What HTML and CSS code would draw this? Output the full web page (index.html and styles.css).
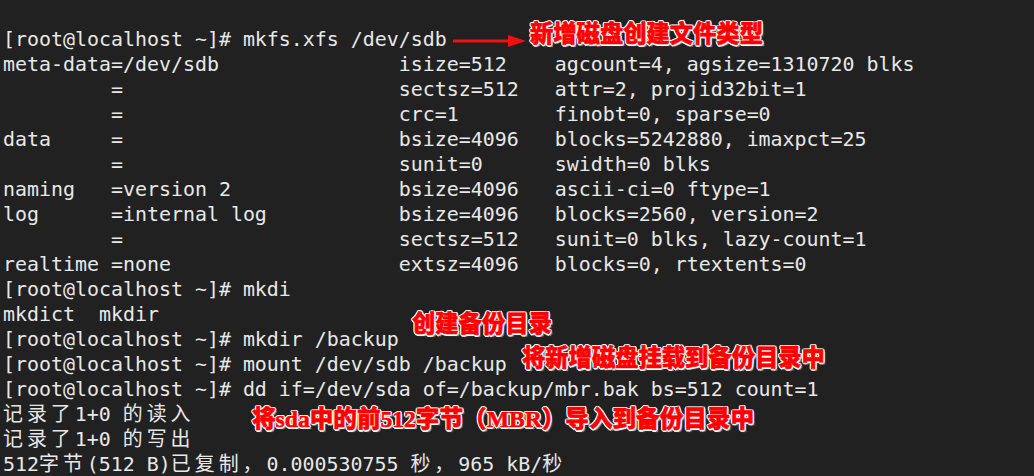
FILE: index.html
```html
<!DOCTYPE html>
<html lang="zh-CN">
<head>
<meta charset="utf-8">
<title>terminal</title>
<link rel="stylesheet" href="styles.css">
</head>
<body>
<div class="term">
<pre class="out">[root@localhost ~]# mkfs.xfs /dev/sdb
meta-data=/dev/sdb               isize=512    agcount=4, agsize=1310720 blks
         =                       sectsz=512   attr=2, projid32bit=1
         =                       crc=1        finobt=0, sparse=0
data     =                       bsize=4096   blocks=5242880, imaxpct=25
         =                       sunit=0      swidth=0 blks
naming   =version 2              bsize=4096   ascii-ci=0 ftype=1
log      =internal log           bsize=4096   blocks=2560, version=2
         =                       sectsz=512   sunit=0 blks, lazy-count=1
realtime =none                   extsz=4096   blocks=0, rtextents=0
[root@localhost ~]# mkdi
mkdict  mkdir
[root@localhost ~]# mkdir /backup
[root@localhost ~]# mount /dev/sdb /backup
[root@localhost ~]# dd if=/dev/sda of=/backup/mbr.bak bs=512 count=1
<span class="cjk">记录了</span>1+0 <span class="cjk">的读入</span>
<span class="cjk">记录了</span>1+0 <span class="cjk">的写出</span>
512<span class="cjk">字节</span>(512 B)<span class="cjk">已复制，</span>0.000530755 <span class="cjk">秒，</span>965 kB/<span class="cjk">秒</span></pre>

<svg class="arrow" width="76" height="16" viewBox="0 0 76 16">
  <line x1="0" y1="7" x2="60" y2="7" stroke="#f01010" stroke-width="3"/>
  <polygon points="55,1 73,7 55,13" fill="#f01010"/>
</svg>
<div class="note n1">新增磁盘创建文件类型</div>
<div class="note n2">创建备份目录</div>
<div class="note n3">将新增磁盘挂载到备份目录中</div>
<div class="note n4">将sda中的前512字节（MBR）导入到备份目录中</div>
</div>
</body>
</html>
```

FILE: styles.css
```css
html, body {
  margin: 0;
  padding: 0;
  background: #212121;
}

.term {
  position: relative;
  width: 1034px;
  height: 476px;
  overflow: hidden;
  background: #212121;
}

.out {
  margin: 0;
  padding: 27px 0 0 3px;
  font-family: "DejaVu Sans Mono", "Noto Sans CJK SC", monospace;
  font-size: 19.93px;
  line-height: 25px;
  color: #e8e8e8;
  white-space: pre;
}

.cjk {
  letter-spacing: 4px;
}

.arrow {
  position: absolute;
  left: 453px;
  top: 34px;
}

.note {
  position: absolute;
  font-family: "Liberation Serif", "Noto Sans CJK SC", serif;
  font-weight: 900;
  font-size: 23.3px;
  line-height: 23px;
  color: #ff0000;
  white-space: nowrap;
  -webkit-text-stroke: 0.6px #ff0000;
  text-shadow:
    1.5px 0 #fff, -1.5px 0 #fff, 0 1.5px #fff, 0 -1.5px #fff,
    1px 1px #fff, -1px -1px #fff, 1px -1px #fff, -1px 1px #fff,
    2px 2px 1px rgba(255,255,255,0.6);
}

.n1 { left: 530px; top: 23px; }
.n2 { left: 412px; top: 313px; }
.n3 { left: 522px; top: 347px; }
.n4 { left: 252px; top: 408px; font-size: 23.6px; }
```
